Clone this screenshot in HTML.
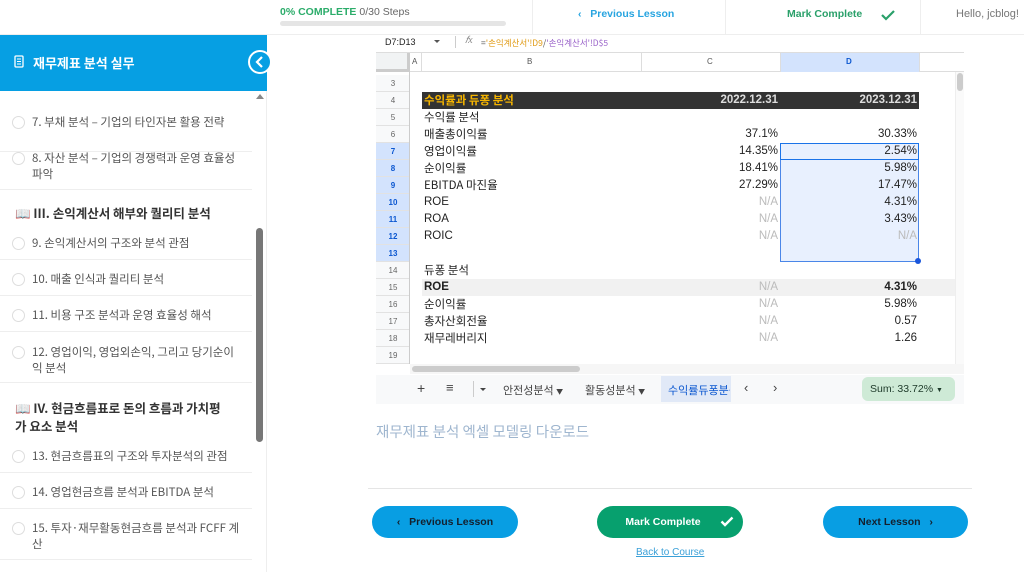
<!DOCTYPE html>
<html><head><meta charset="utf-8">
<style>
*{margin:0;padding:0;box-sizing:border-box}
body{width:1024px;height:572px;overflow:hidden;background:#fff;font-family:"Liberation Sans","Noto Sans CJK KR",sans-serif;position:relative;color:#333}
.a{position:absolute}
.ko{font-family:"Noto Sans CJK KR","Liberation Sans",sans-serif}
.side li{list-style:none;position:absolute;left:0;width:252px;border-bottom:1px solid #eee;font-size:11.5px;color:#555;padding-left:32px;line-height:16px}
.side li:before{content:"";position:absolute;left:12px;top:2px;width:11px;height:11px;border:1px solid #ddd;border-radius:50%}
.sec{position:absolute;left:15px;font-size:12.5px;font-weight:bold;color:#333;line-height:18px}
.rn{position:absolute;left:376px;width:34px;height:17px;font-size:8px;color:#666;text-align:center;line-height:17px;border-bottom:1px solid #e2e2e2;background:#f8f9fa}
.rn.s{background:#d3e3fd;color:#0b57d0;font-weight:bold}
.c{position:absolute;height:17px;line-height:17px;font-size:11.5px;color:#222;white-space:nowrap}
.r{text-align:right}
.na{color:#bbb}
.btn{position:absolute;top:506px;height:32px;border-radius:16px;font-size:10.5px;font-weight:bold;line-height:32px;text-align:center;color:#14202e}
</style></head><body>
<div class="a" style="left:280px;top:6px;font-size:10.5px"><b style="color:#2bac6a">0% COMPLETE</b> <span style="color:#666">0/30 Steps</span></div>
<div class="a" style="left:280px;top:21px;width:226px;height:5px;background:#e5e5e5;border-radius:3px"></div>
<div class="a" style="left:532px;top:0;width:1px;height:34px;background:#eee"></div>
<div class="a" style="left:725px;top:0;width:1px;height:34px;background:#eee"></div>
<div class="a" style="left:920px;top:0;width:1px;height:34px;background:#eee"></div>
<div class="a" style="left:0;top:34px;width:1024px;height:1px;background:#eee"></div>
<div class="a" style="left:578px;top:8px;font-size:10.5px;color:#27a4e0;font-weight:bold">&lsaquo;&nbsp;&nbsp; Previous Lesson</div>
<div class="a" style="left:787px;top:8px;font-size:10.5px;color:#2aa06a;font-weight:bold">Mark Complete</div>
<svg class="a" style="left:880px;top:9px" width="16" height="12"><path d="M2 6l4 4 8-8" stroke="#2aa06a" stroke-width="2.2" fill="none"/></svg>
<div class="a" style="left:956px;top:8px;font-size:11px;color:#777">Hello, jcblog!</div>

<div class="a" style="left:0;top:35px;width:267px;height:56px;background:#069fe3"></div>
<svg class="a" style="left:14px;top:55px" width="10" height="13"><rect x="1" y="1" width="8" height="11" rx="1" stroke="#fff" fill="none" stroke-width="1.3"/><path d="M3 4h4M3 6.5h4M3 9h4" stroke="#fff"/></svg>
<div class="a ko" style="left:33px;top:53px;font-size:13px;font-weight:bold;color:#fff">재무제표 분석 실무</div>
<div class="a" style="left:248px;top:50px;width:24px;height:24px;border-radius:50%;background:#069fe3;border:2px solid #fff"></div>
<svg class="a" style="left:255px;top:56px" width="10" height="12"><path d="M7 1L2 6l5 5" stroke="#fff" stroke-width="2.2" fill="none"/></svg>
<div class="a" style="left:266px;top:91px;width:1px;height:481px;background:#eee"></div>
<div class="a" style="left:256px;top:94px;width:0;height:0;border-left:4px solid transparent;border-right:4px solid transparent;border-bottom:5px solid #888"></div>
<div class="a" style="left:256px;top:228px;width:7px;height:214px;background:#777;border-radius:4px"></div>
<ul class="side ko">
<li style="top:114px;height:38px">7. 부채 분석 – 기업의 타인자본 활용 전략</li>
<li style="top:150px;height:40px">8. 자산 분석 – 기업의 경쟁력과 운영 효율성<br>파악</li>
<li style="top:235px;height:25px">9. 손익계산서의 구조와 분석 관점</li>
<li style="top:271px;height:25px">10. 매출 인식과 퀄리티 분석</li>
<li style="top:307px;height:25px">11. 비용 구조 분석과 운영 효율성 해석</li>
<li style="top:344px;height:39px">12. 영업이익, 영업외손익, 그리고 당기순이<br>익 분석</li>
<li style="top:448px;height:25px">13. 현금흐름표의 구조와 투자분석의 관점</li>
<li style="top:484px;height:25px">14. 영업현금흐름 분석과 EBITDA 분석</li>
<li style="top:520px;height:40px">15. 투자·재무활동현금흐름 분석과 FCFF 계<br>산</li>
</ul>
<div class="sec ko" style="top:204px"><span style="color:#4a8fd6">📖</span> III. 손익계산서 해부와 퀄리티 분석</div>
<div class="sec ko" style="top:399px"><span style="color:#4a8fd6">📖</span> IV. 현금흐름표로 돈의 흐름과 가치평<br>가 요소 분석</div>

<div class="a" style="left:385px;top:37px;font-size:9px;color:#222">D7:D13</div>
<div class="a" style="left:434px;top:40px;border-left:3px solid transparent;border-right:3px solid transparent;border-top:3px solid #555"></div>
<div class="a" style="left:455px;top:36px;width:1px;height:12px;background:#ccc"></div>
<div class="a" style="left:465px;top:35px;font-size:10px;color:#888;font-style:italic;font-family:'Liberation Serif',serif">𝑓x</div>
<div class="a ko" style="left:481px;top:37px;font-size:8.5px"><span style="color:#555">=</span><span style="color:#e09a13">'손익계산서'!D9</span><span style="color:#555">/</span><span style="color:#9a63c9">'손익계산서'!D$5</span></div>
<div class="a" style="left:376px;top:52px;width:588px;height:1px;background:#ddd"></div>
<div class="a" style="left:376px;top:53px;width:34px;height:19px;background:#f1f3f4;border-right:3px solid #ccc;border-bottom:3px solid #ccc"></div>
<div class="a" style="left:410px;top:53px;width:554px;height:19px;background:#fff;border-bottom:1px solid #ddd"></div>
<div class="a" style="left:780px;top:53px;width:139px;height:19px;background:#d3e3fd"></div>
<div class="a" style="left:412px;top:57px;font-size:8px;color:#555">A</div>
<div class="a" style="left:421px;top:53px;width:1px;height:19px;background:#ddd"></div>
<div class="a" style="left:641px;top:53px;width:1px;height:19px;background:#ddd"></div>
<div class="a" style="left:780px;top:53px;width:1px;height:19px;background:#ddd"></div>
<div class="a" style="left:919px;top:53px;width:1px;height:19px;background:#ddd"></div>
<div class="a" style="left:527px;top:57px;font-size:8px;color:#555">B</div>
<div class="a" style="left:707px;top:57px;font-size:8px;color:#555">C</div>
<div class="a" style="left:846px;top:57px;font-size:8px;color:#0b57d0;font-weight:bold">D</div>
<div class="rn" style="top:75px">3</div><div class="rn" style="top:92px">4</div><div class="rn" style="top:109px">5</div><div class="rn" style="top:126px">6</div>
<div class="rn s" style="top:143px">7</div><div class="rn s" style="top:160px">8</div><div class="rn s" style="top:177px">9</div><div class="rn s" style="top:194px">10</div><div class="rn s" style="top:211px">11</div><div class="rn s" style="top:228px">12</div><div class="rn s" style="top:245px">13</div>
<div class="rn" style="top:262px">14</div><div class="rn" style="top:279px">15</div><div class="rn" style="top:296px">16</div><div class="rn" style="top:313px">17</div><div class="rn" style="top:330px">18</div><div class="rn" style="top:347px">19</div>
<div class="a" style="left:409px;top:72px;width:1px;height:292px;background:#ccc"></div>
<div class="a" style="left:422px;top:92px;width:497px;height:17px;background:#333"></div>
<div class="c ko" style="left:424px;top:92px;color:#f5b400;font-weight:bold">수익률과 듀퐁 분석</div>
<div class="c r" style="left:641px;top:92px;width:137px;color:#ddd;font-weight:bold">2022.12.31</div>
<div class="c r" style="left:780px;top:92px;width:137px;color:#ddd;font-weight:bold">2023.12.31</div>
<div class="a" style="left:780px;top:143px;width:139px;height:119px;background:#e8f0fe;border:1px solid #4a86e8"></div>
<div class="a" style="left:780px;top:143px;width:139px;height:17px;border:1.5px solid #1a73e8"></div>
<div class="a" style="left:915px;top:258px;width:6px;height:6px;border-radius:50%;background:#1a56db"></div>
<div class="a" style="left:422px;top:279px;width:535px;height:17px;background:#f1f1f1"></div>
<div class="c ko" style="left:424px;top:109px">수익률 분석</div>
<div class="c ko" style="left:424px;top:126px">매출총이익률</div><div class="c r" style="left:641px;top:126px;width:137px">37.1%</div><div class="c r" style="left:780px;top:126px;width:137px">30.33%</div>
<div class="c ko" style="left:424px;top:143px">영업이익률</div><div class="c r" style="left:641px;top:143px;width:137px">14.35%</div><div class="c r" style="left:780px;top:143px;width:137px">2.54%</div>
<div class="c ko" style="left:424px;top:160px">순이익률</div><div class="c r" style="left:641px;top:160px;width:137px">18.41%</div><div class="c r" style="left:780px;top:160px;width:137px">5.98%</div>
<div class="c ko" style="left:424px;top:177px">EBITDA 마진율</div><div class="c r" style="left:641px;top:177px;width:137px">27.29%</div><div class="c r" style="left:780px;top:177px;width:137px">17.47%</div>
<div class="c" style="left:424px;top:194px">ROE</div><div class="c r na" style="left:641px;top:194px;width:137px">N/A</div><div class="c r" style="left:780px;top:194px;width:137px">4.31%</div>
<div class="c" style="left:424px;top:211px">ROA</div><div class="c r na" style="left:641px;top:211px;width:137px">N/A</div><div class="c r" style="left:780px;top:211px;width:137px">3.43%</div>
<div class="c" style="left:424px;top:228px">ROIC</div><div class="c r na" style="left:641px;top:228px;width:137px">N/A</div><div class="c r na" style="left:780px;top:228px;width:137px">N/A</div>
<div class="c ko" style="left:424px;top:262px">듀퐁 분석</div>
<div class="c" style="left:424px;top:279px;font-weight:bold">ROE</div><div class="c r na" style="left:641px;top:279px;width:137px">N/A</div><div class="c r" style="left:780px;top:279px;width:137px;font-weight:bold">4.31%</div>
<div class="c ko" style="left:424px;top:296px">순이익률</div><div class="c r na" style="left:641px;top:296px;width:137px">N/A</div><div class="c r" style="left:780px;top:296px;width:137px">5.98%</div>
<div class="c ko" style="left:424px;top:313px">총자산회전율</div><div class="c r na" style="left:641px;top:313px;width:137px">N/A</div><div class="c r" style="left:780px;top:313px;width:137px">0.57</div>
<div class="c ko" style="left:424px;top:330px">재무레버리지</div><div class="c r na" style="left:641px;top:330px;width:137px">N/A</div><div class="c r" style="left:780px;top:330px;width:137px">1.26</div>
<div class="a" style="left:955px;top:72px;width:9px;height:292px;background:#fafafa;border-left:1px solid #eee"></div>
<div class="a" style="left:957px;top:73px;width:6px;height:18px;background:#ccc;border-radius:3px"></div>
<div class="a" style="left:410px;top:364px;width:554px;height:10px;background:#f6f6f6"></div>
<div class="a" style="left:412px;top:366px;width:168px;height:6px;background:#ccc;border-radius:3px"></div>
<div class="a" style="left:376px;top:375px;width:588px;height:29px;background:#f8f9fa"></div>
<div class="a" style="left:417px;top:380px;font-size:14px;color:#444">+</div>
<div class="a" style="left:446px;top:380px;font-size:13px;color:#444">≡</div>
<div class="a" style="left:473px;top:381px;width:1px;height:16px;background:#ccc"></div>
<div class="a" style="left:480px;top:388px;border-left:3px solid transparent;border-right:3px solid transparent;border-top:3px solid #444"></div>
<div class="a ko" style="left:503px;top:382px;font-size:11px;color:#444">안전성분석 <span style="font-size:7px">▼</span></div>
<div class="a ko" style="left:585px;top:382px;font-size:11px;color:#444">활동성분석 <span style="font-size:7px">▼</span></div>
<div class="a" style="left:661px;top:376px;width:70px;height:26px;background:#e1e9f7"></div>
<div class="a ko" style="left:668px;top:382px;font-size:11px;color:#0b57d0;width:62px;overflow:hidden;white-space:nowrap">수익률듀퐁분석</div>
<div class="a" style="left:744px;top:380px;font-size:13px;color:#444">&lsaquo;</div>
<div class="a" style="left:773px;top:380px;font-size:13px;color:#444">&rsaquo;</div>
<div class="a" style="left:862px;top:377px;width:93px;height:24px;background:#ceead6;border-radius:6px;font-size:10.5px;line-height:24px;padding-left:8px;color:#1e3a2a">Sum: 33.72% <span style="font-size:7px">▼</span></div>

<div class="a ko" style="left:376px;top:421px;font-size:14.5px;color:#9fb6cf">재무제표 분석 엑셀 모델링 다운로드</div>
<div class="a" style="left:368px;top:488px;width:604px;height:1px;background:#e5e5e5"></div>
<div class="btn" style="left:372px;width:146px;background:#089ee3">&lsaquo;&nbsp;&nbsp; Previous Lesson</div>
<div class="btn" style="left:597px;width:146px;background:#07a06e;color:#fff;padding-right:14px">Mark Complete</div>
<svg class="a" style="left:720px;top:516px" width="14" height="11"><path d="M1.5 5.5l3.5 3.5 7.5-7.5" stroke="#fff" stroke-width="2.4" fill="none"/></svg>
<div class="btn" style="left:823px;width:145px;background:#089ee3">Next Lesson &nbsp;&nbsp;&rsaquo;</div>
<div class="a" style="left:636px;top:547px;font-size:10px;color:#3aa0d8;text-decoration:underline">Back to Course</div>
</body></html>
